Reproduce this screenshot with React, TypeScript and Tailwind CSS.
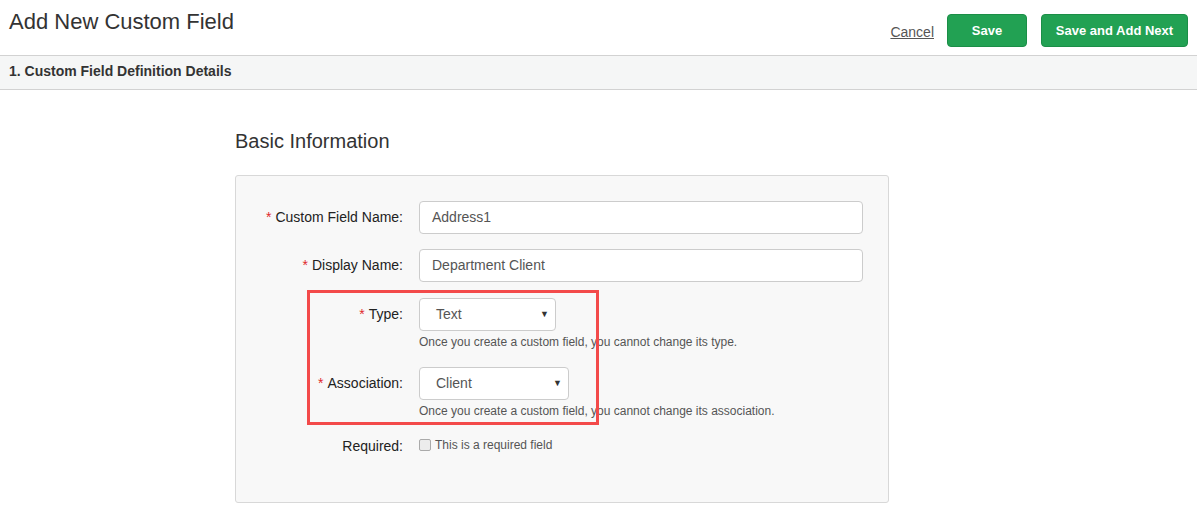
import React from 'react';

const Req = () => <span className="text-[#e0282c] mr-1">*</span>;

const Row: React.FC<{ label: React.ReactNode; children: React.ReactNode; className?: string }> = ({ label, children, className }) => (
    <div className={`flex ${className ?? ''}`}>
        <div className="w-[183px] shrink-0 pr-[16px] text-right text-[14px] text-[#222] leading-[33px]">{label}</div>
        <div className="flex-1">{children}</div>
    </div>
);

const Select: React.FC<{ value: string; width: string }> = ({ value, width }) => (
    <div className={`${width} h-[33px] bg-white border border-[#ccc] rounded-[4px] flex items-center justify-between pl-[16px] pr-[6px] text-[14px] text-[#555]`}>
        <span>{value}</span>
        <span className="text-[9px] text-[#333]">▼</span>
    </div>
);

export default function App() {
    return (
        <div className="min-h-screen bg-white font-['Liberation_Sans',Arial,sans-serif] text-[#333]">
            {/* Header */}
            <div className="flex justify-between h-[55px] px-[9px]">
                <h1 className="text-[22px] leading-[22px] mt-[11px] text-[#333]">Add New Custom Field</h1>
                <div className="flex items-start pt-[14px]">
                    <a className="text-[14px] text-[#555] underline mt-[8px] mr-[13px]">Cancel</a>
                    <button className="h-[33px] w-[80px] pt-[1px] bg-[#22a153] border border-[#1b8e47] rounded-[4px] text-white text-[13px] font-bold">Save</button>
                    <button className="h-[33px] w-[147px] pt-[1px] ml-[14px] bg-[#22a153] border border-[#1b8e47] rounded-[4px] text-white text-[13px] font-bold">Save and Add Next</button>
                </div>
            </div>

            {/* Section band */}
            <div className="h-[35px] border-y border-[#d2d2d2] bg-[#f5f6f6] px-[9px] flex items-center">
                <span className="text-[14px] font-bold text-[#333] -mt-[2px]">1. Custom Field Definition Details</span>
            </div>

            {/* Content */}
            <div className="ml-[235px] w-[654px]">
                <h2 className="text-[20px] leading-[22px] mt-[40px] text-[#333]">Basic Information</h2>
                <div className="relative mt-[23px] h-[328px] bg-[#f8f8f8] border border-[#d8d8d8] rounded-[3px] pt-[25px] pr-[25px]">
                    <Row label={<><Req />Custom Field Name:</>}>
                        <div className="h-[33px] bg-white border border-[#ccc] rounded-[4px] flex items-center px-[12px] text-[14px] text-[#555]">Address1</div>
                    </Row>
                    <Row className="mt-[15px]" label={<><Req />Display Name:</>}>
                        <div className="h-[33px] bg-white border border-[#ccc] rounded-[4px] flex items-center px-[12px] text-[14px] text-[#555]">Department Client</div>
                    </Row>
                    <Row className="mt-[16px]" label={<><Req />Type:</>}>
                        <Select value="Text" width="w-[137px]" />
                        <p className="text-[12px] text-[#555] mt-[4px] leading-[14px]">Once you create a custom field, you cannot change its type.</p>
                    </Row>
                    <Row className="mt-[18px]" label={<><Req />Association:</>}>
                        <Select value="Client" width="w-[150px]" />
                        <p className="text-[12px] text-[#555] mt-[4px] leading-[14px]">Once you create a custom field, you cannot change its association.</p>
                    </Row>
                    <div className="flex items-center mt-[19px] h-[18px]">
                        <div className="w-[183px] shrink-0 pr-[16px] text-right text-[14px] text-[#222]">Required:</div>
                        <label className="flex items-center text-[12px] text-[#555] -mt-[2px]">
                            <span className="w-[12px] h-[12px] border border-[#aaa] rounded-[2px] bg-[#ececec] mr-[4px]" />
                            This is a required field
                        </label>
                    </div>

                    {/* Annotation */}
                    <div className="absolute left-[71px] top-[114px] w-[292px] h-[135px] border-[3px] border-[#f34a4a] pointer-events-none" />
                </div>
            </div>
        </div>
    );
}
